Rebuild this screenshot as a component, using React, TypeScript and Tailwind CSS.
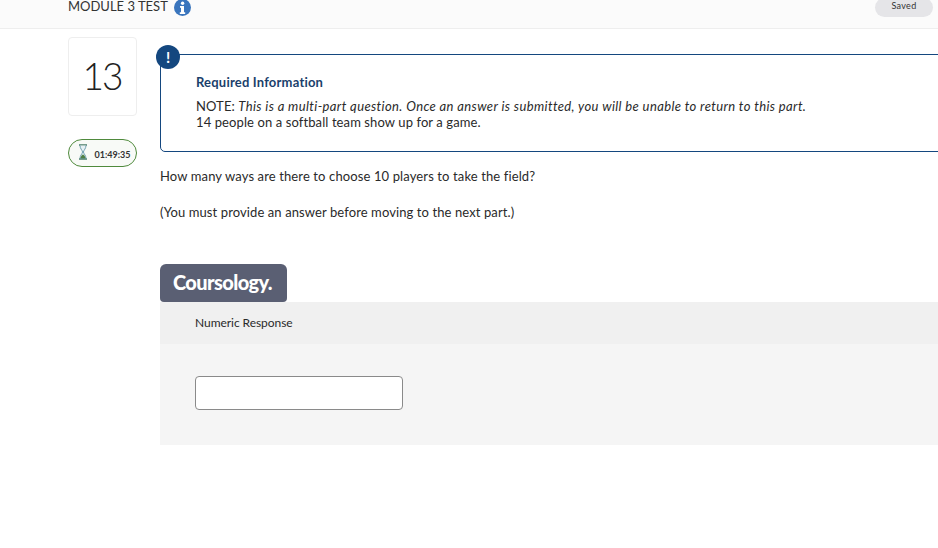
export default function App() {
  return (
    <div className="h-[548px] w-[938px] overflow-hidden bg-white font-['Lato',sans-serif] text-[#222]">
      <header className="flex h-[29px] items-start justify-between border-b border-[#eeeeee] bg-[#fbfbfb] pl-[68px] pr-[5px]">
        <div className="flex items-start gap-[6px]">
          <span className="-mt-[3px] text-[13px] leading-[18px] text-[#333]">MODULE 3 TEST</span>
          <svg width="17" height="17" viewBox="0 0 17 17" className="-mt-[1px]">
            <circle cx="8.5" cy="8.5" r="8.5" fill="#3a75bd" />
            <circle cx="8.6" cy="4.2" r="1.7" fill="#fff" />
            <path d="M6 7h4v6.200h1.200V15H5.800v-1.800H7V8.700H6z" fill="#fff" />
          </svg>
        </div>
        <div className="-mt-[2px] flex h-[19px] w-[58px] items-center justify-center rounded-full bg-[#e5e5e8] pb-[3px] text-[9px] tracking-[0.3px] text-[#333]">
          Saved
        </div>
      </header>
      <main className="flex gap-[23px] pl-[68px] pt-[8px]">
        <aside className="flex w-[69px] shrink-0 flex-col gap-[23px]">
          <div className="flex h-[79px] items-center justify-center rounded-[4px] border border-[#eeeeee] bg-white pb-[3px] pr-[1px] text-[37px] font-light leading-none tracking-[-2px] text-[#222]">
            13
          </div>
          <div className="flex h-[28px] items-center justify-center gap-[7px] rounded-[14px] border border-[#4f8a3c] bg-[#f8faf7] pl-[3px]">
            <svg width="10" height="16" viewBox="0 0 10 16" className="-mt-[3px]">
              <path d="M1 1h8M1 15h8" stroke="#4a7d6a" strokeWidth="1.600" fill="none" />
              <path d="M2 1.500c0 3 2.200 4.600 2.600 6.500C4.200 9.900 2 11.500 2 14.500h6c0-3-2.200-4.600-2.600-6.500C5.800 6.100 8 4.500 8 1.500" fill="#e6f0f4" stroke="#6f9fb0" strokeWidth="1" />
              <path d="M2.400 14.500c.2-2 1.800-3.600 2.600-4.200.8.6 2.400 2.200 2.600 4.200z" fill="#4f7f45" />
            </svg>
            <span className="mt-[3px] text-[9px] font-bold leading-none text-[#333]">01:49:35</span>
          </div>
        </aside>
        <section className="w-[800px] shrink-0 pt-[17px]">
          <div className="relative h-[98px] rounded-[5px] border border-[#14477f] pl-[35px] pt-[19px]">
            <div className="absolute -left-[5px] -top-[10px] flex h-[24px] w-[24px] items-center justify-center rounded-full bg-[#14477f] text-[15px] font-bold leading-none text-white">
              !
            </div>
            <h2 className="text-[13px] font-bold leading-[16px] tracking-[0.2px] text-[#1b3f6b]">Required Information</h2>
            <p className="mt-[8px] text-[13px] leading-[16px] tracking-[0.1px] text-[#2a2a2a]">
              NOTE: <em className="tracking-[0.38px]">This is a multi-part question. Once an answer is submitted, you will be unable to return to this part.</em>
              <br />
              14 people on a softball team show up for a game.
            </p>
          </div>
          <p className="mt-[16px] text-[13px] leading-[16px] tracking-[0.12px] text-[#2a2a2a]">How many ways are there to choose 10 players to take the field?</p>
          <p className="mt-[20px] text-[13px] leading-[16px] tracking-[0.1px] text-[#2a2a2a]">(You must provide an answer before moving to the next part.)</p>
          <div className="mt-[44px] flex h-[38px] w-[127px] items-center rounded-t-[6px] rounded-b-[4px] bg-[#5a5f73] pb-[2px] pl-[13px] text-[20px] font-black leading-none tracking-[-0.6px] text-white">
            Coursology.
          </div>
          <div className="flex h-[42px] items-center bg-[#f0f0f0] pl-[35px] text-[12px] tracking-[-0.05px] text-[#2a2a2a]">Numeric Response</div>
          <div className="h-[101px] bg-[#f5f5f5] pl-[35px] pt-[32px]">
            <input type="text" aria-label="Numeric Response" className="block h-[34px] w-[208px] rounded-[4px] border border-[#8a8a8a] bg-white" />
          </div>
        </section>
      </main>
    </div>
  );
}
